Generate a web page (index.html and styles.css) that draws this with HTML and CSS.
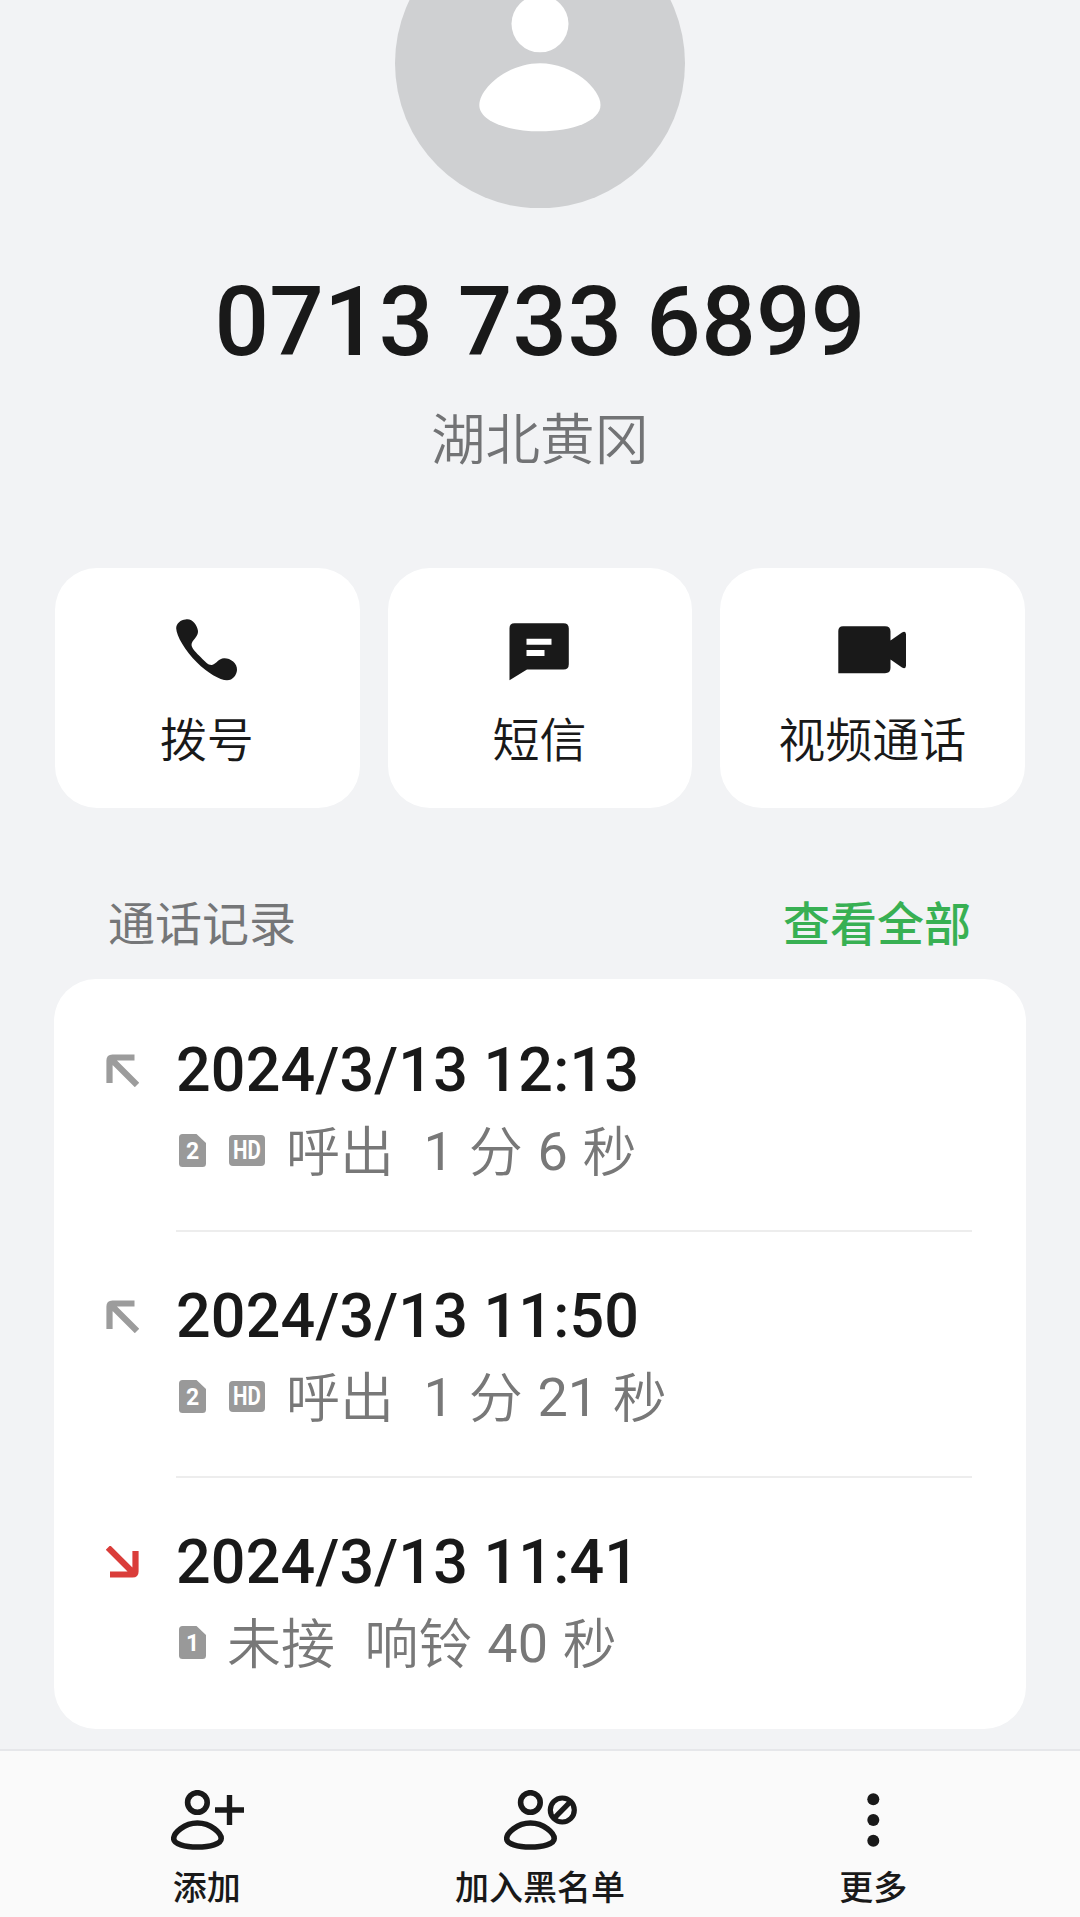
FILE: index.html
```html
<!DOCTYPE html>
<html lang="zh-CN">
<head>
<meta charset="utf-8">
<title>0713 733 6899</title>
<link rel="stylesheet" href="styles.css">
</head>
<body>
<svg class="defs" width="0" height="0">
  <symbol id="outgoing" viewBox="0 0 33 33"><path d="M3.500 29V6.500Q3.500 3.500 6.500 3.500H28.500M5.500 5.500L31 31" fill="none" stroke="currentColor" stroke-width="6.200"/></symbol>
  <symbol id="missed" viewBox="0 0 33 33"><path d="M29.500 5V25.500Q29.500 28.500 26.500 28.500H4M2 1.500L27.500 27" fill="none" stroke="currentColor" stroke-width="6.200"/></symbol>
  <symbol id="sim" viewBox="0 0 27 33"><path d="M3.500 0H17.500L27 9V29.500Q27 33 23.500 33H3.500Q0 33 0 29.500V3.500Q0 0 3.500 0Z" fill="currentColor"/></symbol>
  <symbol id="person" viewBox="0 0 53 60"><circle cx="26.400" cy="12.500" r="9.800" fill="none" stroke="currentColor" stroke-width="5.600"/><path d="M26.400 33C40 33 50.200 43 50.200 48.500C50.200 54 39 57 26.400 57S2.700 54 2.700 48.500C2.700 43 13 33 26.400 33Z" fill="none" stroke="currentColor" stroke-width="5.600"/></symbol>
</svg>
<div class="screen">
  <main class="content">
    <svg class="avatar" viewBox="395 0 290 208">
      <circle cx="540" cy="63.300" r="145" fill="#cfd0d2"/>
      <circle cx="540" cy="23.800" r="28.500" fill="#fff"/>
      <path d="M540 63.300C573 63.300 600.500 89 600.500 105C600.500 121 573 131.300 540 131.300S479.300 121 479.300 105C479.300 89 507 63.300 540 63.300Z" fill="#fff"/>
    </svg>
    <h1 class="number">0713 733 6899</h1>
    <p class="place">湖北黄冈</p>

    <nav class="actions">
      <a class="action">
        <svg class="action-icon" viewBox="0 0 72 72"><path d="M15.500 5.500C22 4 27 10.500 28 17C28.500 23 21.500 26 21.500 31C22 35 26.500 39 31 43.500C35 47.500 38.500 51.500 42 51C47 49.500 48.500 44.500 54 44.300C60 44 67.500 49 67 56C66.500 61 63 66.300 57 66.300C50 66.300 37 58.500 27 48.500C15 36.500 6.500 22 6.200 14.500C6 9.500 11 5.500 15.500 5.500Z" fill="currentColor"/></svg>
        <span class="action-label">拨号</span>
      </a>
      <a class="action">
        <svg class="action-icon" viewBox="0 0 72 72"><path d="M11.500 9.300H60.500Q65.800 9.300 65.800 14.600V50.200Q65.800 55.500 60.500 55.500H24L6.500 66.200V14.300Q6.500 9.300 11.500 9.300Z" fill="currentColor"/><path d="M23.500 27.700H48.500M23.500 39H41.500" stroke="#fff" stroke-width="6"/></svg>
        <span class="action-label">短信</span>
      </a>
      <a class="action">
        <svg class="action-icon" viewBox="0 0 72 72"><path d="M7 12.300H49Q54.500 12.300 54.500 17.500V26.500L66 18.500Q70 16.500 70 20.500V51.500Q70 55.500 66 53.500L54.500 45.500V54Q54.500 59.200 49 59.200H2.300V17Q2.300 12.300 7 12.300Z" fill="currentColor"/></svg>
        <span class="action-label">视频通话</span>
      </a>
    </nav>

    <header class="section-head">
      <h2 class="section-title">通话记录</h2>
      <a class="see-all">查看全部</a>
    </header>

    <ul class="calls">
      <li class="call">
        <svg class="direction"><use href="#outgoing"/></svg>
        <div class="call-body">
          <div class="time">2024/3/13 12:13</div>
          <div class="detail">
            <span class="sim"><svg class="sim-shape"><use href="#sim"/></svg><b class="sim-slot">2</b></span>
            <span class="hd"><b class="hd-text">HD</b></span>
            <span class="summary">呼出&nbsp; <span class="num">1</span> 分 <span class="num">6</span> 秒</span>
          </div>
        </div>
      </li>
      <li class="call">
        <svg class="direction"><use href="#outgoing"/></svg>
        <div class="call-body">
          <div class="time">2024/3/13 11:50</div>
          <div class="detail">
            <span class="sim"><svg class="sim-shape"><use href="#sim"/></svg><b class="sim-slot">2</b></span>
            <span class="hd"><b class="hd-text">HD</b></span>
            <span class="summary">呼出&nbsp; <span class="num">1</span> 分 <span class="num">21</span> 秒</span>
          </div>
        </div>
      </li>
      <li class="call">
        <svg class="direction direction-missed"><use href="#missed"/></svg>
        <div class="call-body">
          <div class="time">2024/3/13 11:41</div>
          <div class="detail">
            <span class="sim"><svg class="sim-shape"><use href="#sim"/></svg><b class="sim-slot">1</b></span>
            <span class="summary">未接&nbsp; 响铃 <span class="num">40</span> 秒</span>
          </div>
        </div>
      </li>
    </ul>
  </main>

  <footer class="toolbar">
    <a class="tool">
      <svg class="tool-icon" viewBox="0 0 74 60"><use href="#person" x="1" width="53" height="60"/><path d="M45 20H74M59.500 5V35" stroke="currentColor" stroke-width="5.400"/></svg>
      <span class="tool-label">添加</span>
    </a>
    <a class="tool">
      <svg class="tool-icon" viewBox="0 0 74 60"><use href="#person" x="1" width="53" height="60"/><g fill="none" stroke="currentColor" stroke-width="5.200"><circle cx="59.300" cy="20" r="12"/><path d="M50.500 28.800L68 11.200"/></g></svg>
      <span class="tool-label">加入黑名单</span>
    </a>
    <a class="tool">
      <svg class="tool-icon" viewBox="0 0 74 60"><g fill="currentColor"><circle cx="37.300" cy="9.300" r="6"/><circle cx="37.300" cy="30" r="6"/><circle cx="37.300" cy="50.700" r="6"/></g></svg>
      <span class="tool-label">更多</span>
    </a>
  </footer>
</div>
</body>
</html>
```

FILE: styles.css
```css
* {
  box-sizing: border-box;
  margin: 0;
  padding: 0;
}

body {
  background: #f2f3f5;
  color: #191919;
  font-family: Roboto, "Noto Sans CJK SC", sans-serif;
}

.defs {
  display: block;
}

.screen {
  display: flex;
  flex-direction: column;
  height: 1917px;
  overflow: hidden;
}

.content {
  flex: 1;
  display: flex;
  flex-direction: column;
  padding: 0 54px;
}

.avatar {
  display: block;
  align-self: center;
  width: 290px;
  height: 208px;
}

.number {
  margin-top: 58px;
  font-size: 96px;
  font-weight: 500;
  letter-spacing: 0.25px;
  line-height: 112px;
  text-align: center;
}

.place {
  margin-top: 26px;
  color: #727375;
  font-size: 54.5px;
  font-weight: 350;
  line-height: 72px;
  text-align: center;
}

.actions {
  display: grid;
  grid-template-columns: repeat(3, 1fr);
  gap: 28px;
  margin: 92px 1px 0;
}

.action {
  display: flex;
  flex-direction: column;
  align-items: center;
  height: 240px;
  padding-top: 46px;
  border-radius: 42px;
  background: #fff;
}

.action-icon {
  width: 72px;
  height: 72px;
  margin-right: 2px;
}

.action-label {
  margin-top: 23px;
  margin-right: 1px;
  font-size: 47px;
  font-weight: 350;
  line-height: 64px;
}

.section-head {
  display: flex;
  justify-content: space-between;
  margin-top: 85px;
  padding: 0 55px 0 54px;
  font-size: 47px;
  line-height: 64px;
}

.section-title {
  color: #757678;
  font-size: inherit;
  font-weight: 400;
}

.see-all {
  color: #38b053;
  font-weight: 500;
}

.calls {
  margin-top: 22px;
  padding: 7px 54px 0 52px;
  height: 750px;
  border-radius: 42px;
  background: #fff;
  list-style: none;
}

.call {
  display: flex;
  height: 246px;
}

.direction {
  width: 33px;
  height: 33px;
  margin-top: 68px;
  color: #9c9c9c;
}

.direction-missed {
  color: #da3d3a;
}

.call-body {
  flex: 1;
  margin-left: 37px;
  padding-top: 48px;
  border-bottom: 2px solid #ededed;
}

.call:last-child .call-body {
  border-bottom: 0;
}

.time {
  font-size: 61px;
  font-weight: 500;
  letter-spacing: 0.2px;
  line-height: 73px;
}

.detail {
  display: flex;
  align-items: center;
  height: 72px;
  margin-top: 7px;
  padding-left: 3px;
  color: #787878;
  font-size: 54px;
  font-weight: 350;
}

.sim {
  display: grid;
  width: 27px;
  height: 33px;
  color: #999;
}

.sim-shape,
.sim-slot {
  grid-area: 1 / 1;
}

.sim-shape {
  width: 27px;
  height: 33px;
}

.sim-slot {
  z-index: 1;
  color: #fff;
  font-size: 23px;
  font-weight: 700;
  line-height: 35px;
  text-align: center;
}

.hd {
  display: flex;
  justify-content: center;
  width: 36px;
  height: 31px;
  margin-left: 23px;
  border-radius: 4px;
  background: #999;
}

.hd-text {
  color: #fff;
  font-size: 25px;
  font-weight: 700;
  line-height: 32px;
  transform: scaleX(0.82);
}

.summary {
  margin-left: 21px;
  padding-top: 8px;
  line-height: 72px;
  white-space: nowrap;
  word-spacing: 1.6px;
}

.num {
  line-height: 1;
  vertical-align: 2px;
}

.num {
  font-weight: 400;
}

.toolbar {
  display: grid;
  grid-template-columns: repeat(3, 1fr);
  height: 168px;
  padding: 0 40px;
  border-top: 2px solid #e6e7ea;
  background: #fafafa;
}

.tool {
  display: flex;
  flex-direction: column;
  align-items: center;
  padding-top: 39px;
}

.tool-icon {
  width: 74px;
  height: 60px;
}

.tool-label {
  margin-top: 15px;
  font-size: 34px;
  font-weight: 500;
  line-height: 46px;
}
```
